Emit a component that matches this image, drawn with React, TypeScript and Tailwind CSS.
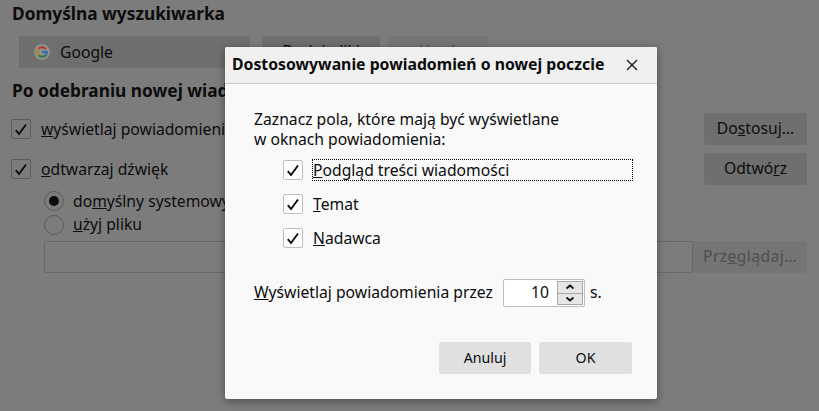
import { X } from "lucide-react";
import type { ReactNode } from "react";

function Box({ dim }: { dim?: boolean }) {
  return (
    <span
      className={`flex h-5 w-5 shrink-0 items-center justify-center rounded-[2px] border ${
        dim ? "border-[#5c5c5c] bg-[#7c7c7c]" : "border-[#bdbdbd] bg-white"
      }`}
    >
      <svg viewBox="0 0 18 18" className="h-[18px] w-[18px]">
        <path d="M3.800 10.200 7 14 14 4.500" fill="none" stroke="#0c0c0d" strokeWidth="1.900" />
      </svg>
    </span>
  );
}

function Radio({ on }: { on?: boolean }) {
  return (
    <span className="flex h-5 w-5 shrink-0 items-center justify-center rounded-full border border-[#5c5c5c]">
      {on && <span className="h-[10px] w-[10px] rounded-full bg-[#0c0c0d]" />}
    </span>
  );
}

function DimButton({ children, className }: { children: ReactNode; className?: string }) {
  return (
    <div
      className={`flex h-8 items-center justify-center rounded-[2px] bg-[#6f6f6f] text-[15.7px] ${className ?? ""}`}
    >
      {children}
    </div>
  );
}

function DialogCheck({ children, focused }: { children: ReactNode; focused?: boolean }) {
  return (
    <div className="flex h-[24px] items-center gap-[9px]">
      <Box />
      <span
        className={`flex h-[22px] flex-1 items-center pt-[2px] ${
          focused ? "border border-dotted border-black" : "border border-transparent"
        }`}
      >
        {children}
      </span>
    </div>
  );
}

export default function App() {
  return (
    <div
      className="relative h-[411px] w-[819px] overflow-hidden bg-[#7c7c7c] text-[#0c0c0d]"
      style={{ fontFamily: '"Noto Sans", sans-serif' }}
    >
      {/* Page behind the dialog */}
      <div className="px-3 pt-1">
        <h2 className="text-[17.3px] leading-[20px] font-bold">Domyślna wyszukiwarka</h2>
        <div className="mt-3 flex pl-[7px]">
          <div className="flex h-8 w-[231px] items-center gap-[10px] rounded-[2px] bg-[#6f6f6f] pl-[15px] text-[15.7px]">
            <svg viewBox="0 0 16 16" className="h-4 w-4">
              <circle cx="8" cy="8" r="8" fill="#8f8f8f" />
              <path d="M11.900 5.300A4.700 4.700 0 0 0 4.700 4.700" fill="none" stroke="#b5382c" strokeWidth="2" />
              <path d="M4.700 4.700a4.700 4.700 0 0 0 0 6.600" fill="none" stroke="#b08a10" strokeWidth="2" />
              <path d="M4.700 11.300a4.700 4.700 0 0 0 6.800 0" fill="none" stroke="#2f7a3f" strokeWidth="2" />
              <path d="M11.500 11.300A4.700 4.700 0 0 0 12.700 8H8" fill="none" stroke="#3166b0" strokeWidth="2" />
            </svg>
            <span className="pt-[2px]">Google</span>
          </div>
          <DimButton className="ml-3 w-[118px]">Dodaj pliki</DimButton>
          <DimButton className="ml-2 w-[100px] bg-[#757575] text-[#4f4f4f]">Usuń</DimButton>
        </div>
        <h2 className="mt-[13px] text-[17.3px] leading-[20px] font-bold">Po odebraniu nowej wiadomości</h2>
        <div className="mt-[12px] flex h-8 items-center justify-between">
          <div className="-ml-px flex items-center gap-[10px] text-[15.7px]">
            <Box dim />
            <span className="pt-[2px]"><span className="underline">w</span>yświetlaj powiadomienie</span>
          </div>
          <DimButton className="w-[103px]">
            <span>Do<span className="underline">s</span>tosuj…</span>
          </DimButton>
        </div>
        <div className="mt-2 flex h-8 items-center justify-between">
          <div className="-ml-px flex items-center gap-[10px] text-[15.7px]">
            <Box dim />
            <span className="pt-[2px]"><span className="underline">o</span>dtwarzaj dźwięk</span>
          </div>
          <DimButton className="w-[103px]">
            <span>Odtwó<span className="underline">r</span>z</span>
          </DimButton>
        </div>
        <div className="mt-[6px] flex flex-col gap-1 pl-[32px] text-[15.7px]">
          <div className="flex h-5 items-center gap-[9px]">
            <Radio on />
            <span className="pt-[2px]">do<span className="underline">m</span>yślny systemowy</span>
          </div>
          <div className="flex h-5 items-center gap-[9px]">
            <Radio />
            <span><span className="underline">u</span>żyj pliku</span>
          </div>
        </div>
        <div className="mt-[6px] flex h-8 pl-[32px]">
          <div className="flex-1 rounded-[2px] border border-[#686868]" />
          <DimButton className="w-[114px] bg-[#757575] tracking-[0.4px] text-[#4f4f4f]">
            <span>Prz<span className="underline">e</span>glądaj…</span>
          </DimButton>
        </div>
      </div>

      {/* Dialog */}
      <div className="absolute top-[47px] left-[225px] flex h-[352px] w-[432px] flex-col overflow-hidden rounded-[2px] bg-[#f9f9f9] shadow-[0_2px_8px_rgba(0,0,0,0.4)]">
        <div className="flex h-[37px] shrink-0 items-center justify-between border-b border-[#c8c8c8] bg-[#f0f0f0] pr-[16px] pl-[7px]">
          <span className="text-[15.8px] font-bold">Dostosowywanie powiadomień o nowej poczcie</span>
          <X className="h-[18px] w-[18px] text-[#2a2a2a]" strokeWidth={2} />
        </div>
        <div className="flex flex-1 flex-col pt-[25px] pr-[24px] pl-[29px] text-[15.7px]">
          <p className="leading-[20px]">
            Zaznacz pola, które mają być wyświetlane
            <br />
            w oknach powiadomienia:
          </p>
          <div className="mt-[9px] flex flex-col gap-[10px] pl-[29px]">
            <DialogCheck focused>
              <span><span className="underline">P</span>odgląd treści wiadomości</span>
            </DialogCheck>
            <DialogCheck>
              <span><span className="underline">T</span>emat</span>
            </DialogCheck>
            <DialogCheck>
              <span><span className="underline">N</span>adawca</span>
            </DialogCheck>
          </div>
          <div className="mt-[29px] flex h-7 items-center">
            <span><span className="underline">W</span>yświetlaj powiadomienia przez</span>
            <div className="ml-[10px] flex h-7 w-[82px] items-center justify-between rounded-[2px] border border-[#bdbdbd] bg-white pr-[1px] pl-[4px]">
              <span className="flex-1 pr-[8px] text-right">10</span>
              <div className="flex h-[24px] w-[26px] flex-col border border-[#a8a8a8] bg-[#e6e6e6]">
                <div className="flex flex-1 items-center justify-center border-b border-[#a8a8a8]">
                  <svg viewBox="0 0 10 6" className="h-[6px] w-[10px]">
                    <path d="M1.500 4.500 5 1.500l3.500 3" fill="none" stroke="#111" strokeWidth="1.800" />
                  </svg>
                </div>
                <div className="flex flex-1 items-center justify-center">
                  <svg viewBox="0 0 10 6" className="h-[6px] w-[10px]">
                    <path d="M1.500 1.500 5 4.500l3.500-3" fill="none" stroke="#111" strokeWidth="1.800" />
                  </svg>
                </div>
              </div>
            </div>
            <span className="ml-[5px]">s.</span>
          </div>
          <div className="mt-auto mr-px mb-[25px] flex justify-end gap-2">
            <div className="flex h-8 w-[92px] items-center justify-center rounded-[2px] bg-[#e0e0e1] text-[14.2px]">Anuluj</div>
            <div className="flex h-8 w-[93px] items-center justify-center rounded-[2px] bg-[#e0e0e1] text-[14.2px]">OK</div>
          </div>
        </div>
      </div>
    </div>
  );
}
